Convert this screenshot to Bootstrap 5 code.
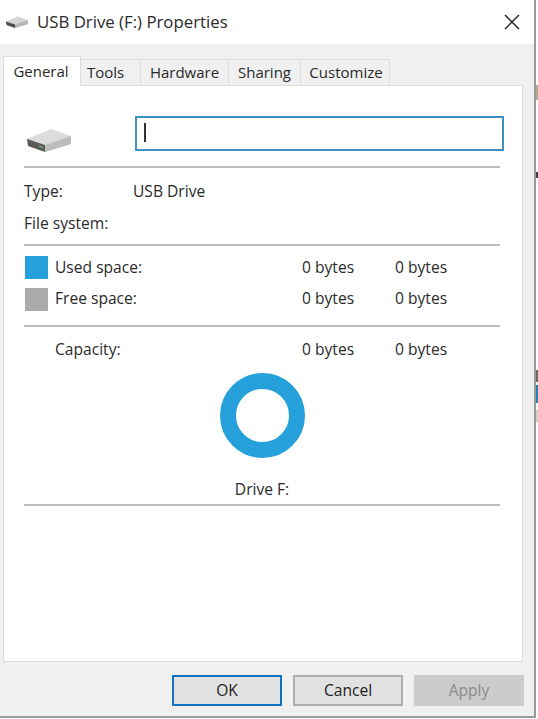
<!doctype html>
<html lang="en">
<head>
  <meta charset="utf-8">
  <title>USB Drive (F:) Properties</title>
  <link href="https://cdn.jsdelivr.net/npm/bootstrap@5.3.0/dist/css/bootstrap.min.css" rel="stylesheet">
  <style>
    html, body { height: 100%; }
    body {
      background: #fff;
      overflow: hidden;
      font-family: "Open Sans", "Noto Sans", sans-serif;
      font-size: 15.6px;
      color: #2a2a2a;
    }
    .win { width: 536px; height: 718px; flex-shrink: 0; border-right: 2px solid #9a9a9a; border-bottom: 2px solid #9a9a9a; }
    .win-title { height: 44px; padding-left: 6px; font-size: 16.8px; background: #fff; flex-shrink: 0; }
    .title-icon { margin-right: 9px; }
    .win-close { margin-right: 14px; line-height: 0; }
    .win-body { height: 672px; background: #f0f0f0; padding: 12px 0 0 3px; }
    .tab-strip { height: 29px; font-size: 15px; }
    .tab-item { height: 26px; justify-content: center; background: #f0f0f0; border: 1px solid #dcdcdc; border-left: 0; border-bottom: 0; white-space: nowrap; }
    .tab-item.active-tab { height: 30px; width: 78px; padding-right: 2px; background: #fff; margin-bottom: -1px; border-left: 1px solid #dcdcdc; position: relative; z-index: 1; }
    .tab-tools { width: 60px; padding-right: 10px; }
    .tab-hardware { width: 88px; }
    .tab-sharing { width: 72px; }
    .tab-customize { width: 89px; padding-left: 2px; }
    .tab-panel { width: 520px; height: 577px; background: #fff; border: 1px solid #dcdcdc; padding: 0 21px 0 20px; }
    .name-row { height: 80px; padding-top: 30px; }
    .drive-big { margin: 12px 0 0 3px; flex-shrink: 0; }
    .name-box { width: 369px; height: 35px; margin-left: 64px; border: 2px solid #3d8fc6; padding: 5px 0 0 7px; flex-shrink: 0; }
    .caret-bar { display: block; width: 2px; height: 19px; background: #333; }
    .rule { height: 2px; background: #bcbcbc; margin: 0; opacity: 1; border: 0; width: 476px; }
    .info-row { height: 32px; }
    .row-used { height: 31px; margin-top: 6px; }
    .rule-cap { margin-top: 10px; }
    .row-cap { margin-top: 7px; }
    .lbl { width: 109px; }
    .swatch { width: 23px; height: 23px; margin: 0 7px 0 1px; flex-shrink: 0; }
    .swatch-used { background: #26a0da; }
    .swatch-free { background: #ababab; }
    .name-col { width: 247px; }
    .num-col { width: 93px; }
    .ring-wrap { width: 476px; }
    .donut { width: 85px; height: 85px; border: 16px solid #26a0da; border-radius: 50%; margin-top: 7px; }
    .drive-cap { margin-top: 21px; margin-bottom: 5px; line-height: 20px; }
    .btn-row { width: 521px; margin-top: 13px; gap: 11px; }
    .btn-win { width: 110px; height: 31px; padding: 0; border-radius: 0; font-size: 15.6px; font-family: inherit; background: #e1e1e1; border: 2px solid #adadad; color: #222; }
    .btn-win.btn-ok { border-color: #0f74c4; }
    .btn-win.btn-off { color: #8a8a8a; background: #ccc; border-color: #ccc; opacity: 1; }
    .side-strip { width: 2px; flex-shrink: 0; }
    .speck { display: block; }
    .speck-a { height: 15px; margin-top: 85px; background: #b9a98c; }
    .speck-b { height: 6px; margin-top: 72px; background: #4a3a44; }
    .speck-c { height: 12px; margin-top: 192px; background: #6d675f; }
    .speck-d { height: 18px; margin-top: 3px; background: #2d7fb0; }
    .speck-e { height: 12px; margin-top: 7px; background: #d8d2b8; }
  </style>
</head>
<body>
  <div class="d-flex">
    <div class="win d-flex flex-column">
      <div class="win-title d-flex align-items-center">
        <svg class="title-icon" width="22" height="12" viewBox="0 0 44 24"><path d="M0 11 24 1l20 7v8L18 24 1 18z" fill="#d6d6d6"/><path d="M0 11l18 6v7L1 18z" fill="#4d4d4d"/><path d="M18 17 44 8v8L18 24z" fill="#b5b5b5"/></svg>
        <span class="flex-grow-1">USB Drive (F:) Properties</span>
        <span class="win-close"><svg width="16" height="16" viewBox="0 0 16 16"><path d="M1 1l14 14M15 1 1 15" stroke="#222" stroke-width="1.4" fill="none"/></svg></span>
      </div>
      <div class="win-body">
        <div class="tab-strip d-flex align-items-end">
          <div class="tab-item active-tab d-flex align-items-center">General</div>
          <div class="tab-item tab-tools d-flex align-items-center">Tools</div>
          <div class="tab-item tab-hardware d-flex align-items-center">Hardware</div>
          <div class="tab-item tab-sharing d-flex align-items-center">Sharing</div>
          <div class="tab-item tab-customize d-flex align-items-center">Customize</div>
        </div>
        <div class="tab-panel">
          <div class="name-row d-flex align-items-start">
            <svg class="drive-big" width="44" height="24" viewBox="0 0 44 24"><path d="M0 11 24 1l20 7v8L18 24 1 18z" fill="#dcdcdc"/><path d="M0 11l18 6v7L1 18z" fill="#5a5a5a"/><path d="M18 17 44 8v8L18 24z" fill="#bdbdbd"/><path d="M12 17.5l4 1.3v1.6l-4-1.3z" fill="#5fae5f"/></svg>
            <div class="name-box bg-white"><span class="caret-bar"></span></div>
          </div>
          <hr class="rule">
          <div class="info-row d-flex align-items-center mt-2"><span class="lbl">Type:</span><span>USB Drive</span></div>
          <div class="info-row d-flex align-items-center"><span class="lbl">File system:</span></div>
          <hr class="rule mt-1">
          <div class="info-row row-used d-flex align-items-center"><span class="swatch swatch-used"></span><span class="name-col">Used space:</span><span class="num-col">0 bytes</span><span>0 bytes</span></div>
          <div class="info-row d-flex align-items-center"><span class="swatch swatch-free"></span><span class="name-col">Free space:</span><span class="num-col">0 bytes</span><span>0 bytes</span></div>
          <hr class="rule rule-cap">
          <div class="info-row row-cap d-flex align-items-center"><span class="swatch invisible"></span><span class="name-col">Capacity:</span><span class="num-col">0 bytes</span><span>0 bytes</span></div>
          <div class="ring-wrap d-flex flex-column align-items-center">
            <div class="donut"></div>
            <div class="drive-cap">Drive F:</div>
          </div>
          <hr class="rule">
        </div>
        <div class="btn-row d-flex justify-content-end">
          <button class="btn btn-win btn-ok" type="button">OK</button>
          <button class="btn btn-win" type="button">Cancel</button>
          <button class="btn btn-win btn-off" type="button" disabled>Apply</button>
        </div>
      </div>
    </div>
    <div class="side-strip">
      <span class="speck speck-a"></span>
      <span class="speck speck-b"></span>
      <span class="speck speck-c"></span>
      <span class="speck speck-d"></span>
      <span class="speck speck-e"></span>
    </div>
  </div>
  <script src="https://cdn.jsdelivr.net/npm/bootstrap@5.3.0/dist/js/bootstrap.bundle.min.js"></script>
</body>
</html>
